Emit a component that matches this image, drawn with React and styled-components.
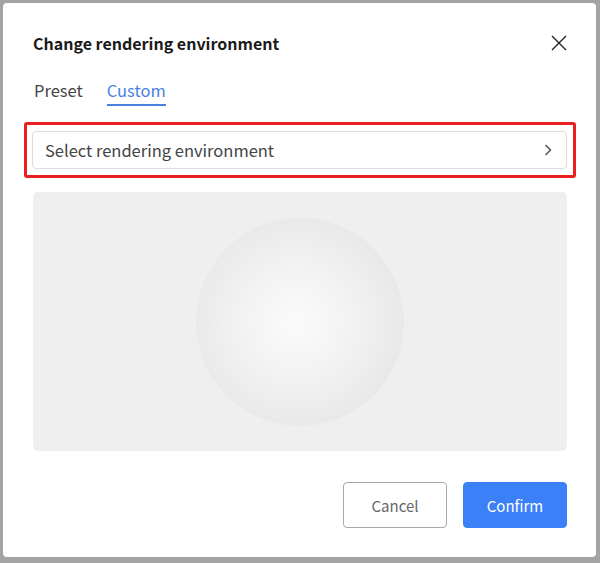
import React from "react";
import styled, { createGlobalStyle } from "styled-components";

const Global = createGlobalStyle`
  html, body { margin: 0; padding: 0; }
  body { font-family: "Noto Sans CJK SC", "Noto Sans", sans-serif; }
  * { box-sizing: border-box; }
`;

const Page = styled.div`
  width: 600px;
  height: 563px;
  background: #a3a3a3;
  padding: 3px 4px 6px 3px;
`;

const Dialog = styled.div`
  height: 100%;
  background: #fff;
  border-radius: 4px;
  padding: 28px 29px 29px 30px;
  display: flex;
  flex-direction: column;
`;

const Header = styled.div`
  display: flex;
  align-items: center;
  justify-content: space-between;
  height: 24px;
`;

const Title = styled.h2`
  margin: 0;
  font-size: 16px;
  font-weight: 700;
  line-height: 24px;
  color: #1a1a1a;
`;

const Close = styled.button`
  border: 0;
  background: none;
  padding: 0;
  width: 24px;
  height: 24px;
  display: flex;
  align-items: center;
  justify-content: center;
  margin-right: -4px;
  cursor: pointer;
`;

const Tabs = styled.div`
  display: flex;
  gap: 24px;
  margin-top: 23px;
  padding-left: 1px;
`;

const Tab = styled.div`
  font-size: 16.5px;
  line-height: 24px;
  padding-bottom: 2px;
  color: ${(p) => (p.$active ? "#4a7fe2" : "#444")};
  border-bottom: 2px solid ${(p) => (p.$active ? "#4a7fe2" : "transparent")};
`;

const Highlight = styled.div`
  margin: 16px -9px 0 -9px;
  border: 3px solid #ea1f1f;
  border-radius: 3px;
  padding: 6px 6px 6px 5px;
`;

const Select = styled.div`
  height: 38px;
  border: 1px solid #dcdcdc;
  border-radius: 4px;
  display: flex;
  align-items: center;
  justify-content: space-between;
  padding: 0 14px 0 12px;
  font-size: 16.5px;
  color: #444;
  background: #fff;
`;

const Preview = styled.div`
  margin-top: 14px;
  height: 259px;
  background: #efefef;
  border-radius: 5px;
  display: flex;
  align-items: center;
  justify-content: center;
`;

const Sphere = styled.div`
  width: 208px;
  height: 208px;
  border-radius: 50%;
  background: radial-gradient(circle at 48% 50%, #fbfbfb 0%, #f3f3f3 35%, #e6e6e6 80%, #e0e0e0 100%);
`;

const Footer = styled.div`
  margin-top: auto;
  display: flex;
  justify-content: flex-end;
  gap: 16px;
`;

const Button = styled.button`
  width: 104px;
  height: 46px;
  border-radius: 4px;
  font-family: inherit;
  font-size: 15px;
  cursor: pointer;
  border: 1px solid ${(p) => (p.$primary ? "#3b80f6" : "#a8a8a8")};
  background: ${(p) => (p.$primary ? "#3b80f6" : "#fff")};
  color: ${(p) => (p.$primary ? "#fff" : "#666")};
`;

export default function App() {
  return (
    <>
      <Global />
      <Page>
        <Dialog>
          <Header>
            <Title>Change rendering environment</Title>
            <Close aria-label="Close">
              <svg width="16" height="16" viewBox="0 0 16 16" fill="none" stroke="#222" strokeWidth="1.4">
                <path d="M1 1 L15 15 M15 1 L1 15" />
              </svg>
            </Close>
          </Header>
          <Tabs>
            <Tab>Preset</Tab>
            <Tab $active>Custom</Tab>
          </Tabs>
          <Highlight>
            <Select>
              <span>Select rendering environment</span>
              <svg width="8" height="12" viewBox="0 0 8 12" fill="none" stroke="#555" strokeWidth="1.5">
                <path d="M1.5 1 L6.5 6 L1.5 11" />
              </svg>
            </Select>
          </Highlight>
          <Preview>
            <Sphere />
          </Preview>
          <Footer>
            <Button>Cancel</Button>
            <Button $primary>Confirm</Button>
          </Footer>
        </Dialog>
      </Page>
    </>
  );
}
